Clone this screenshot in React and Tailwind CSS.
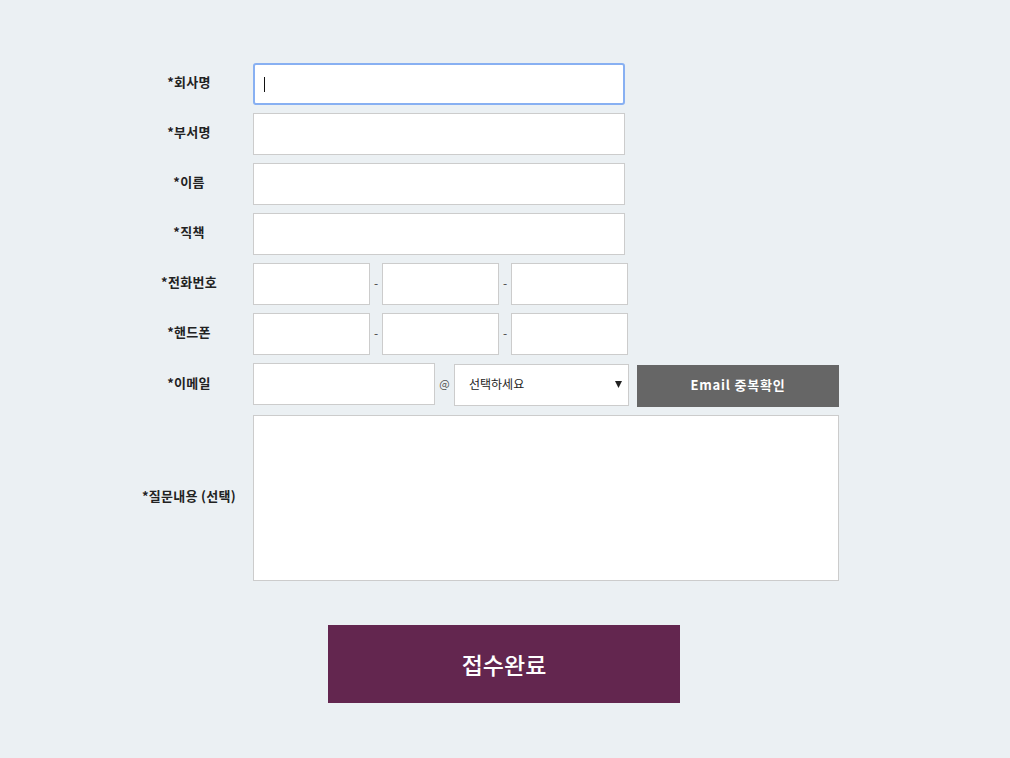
export default function App() {
  const label =
    "w-[128px] shrink-0 pb-[5px] text-center text-[13px] font-bold text-[#222] leading-none tracking-[0.3px]";
  const box = "h-[42px] bg-white border border-[#cccccc] outline-none";
  const Dash = () => (
    <span className="w-[12px] pb-[3px] text-center text-[12px] text-[#444] leading-none">-</span>
  );
  return (
    <div className="min-h-screen bg-[#ebf0f3] pt-[63px] font-['Noto_Sans_CJK_KR','Noto_Sans',sans-serif]">
      <div className="ml-[125px] w-[714px] flex flex-col gap-2">
        <div className="flex items-center">
          <div className={label}>*회사명</div>
          <div className="relative w-[372px] h-[42px] bg-white border-2 border-[#88b0f2] rounded-[3px]">
            <span className="absolute left-[9px] top-[12px] w-px h-[15px] bg-[#111]" />
          </div>
        </div>
        <div className="flex items-center">
          <div className={label}>*부서명</div>
          <input className={`${box} w-[372px]`} />
        </div>
        <div className="flex items-center">
          <div className={label}>*이름</div>
          <input className={`${box} w-[372px]`} />
        </div>
        <div className="flex items-center">
          <div className={label}>*직책</div>
          <input className={`${box} w-[372px]`} />
        </div>
        <div className="flex items-center">
          <div className={label}>*전화번호</div>
          <input className={`${box} w-[117px]`} />
          <Dash />
          <input className={`${box} w-[117px]`} />
          <Dash />
          <input className={`${box} w-[117px]`} />
        </div>
        <div className="flex items-center">
          <div className={label}>*핸드폰</div>
          <input className={`${box} w-[117px]`} />
          <Dash />
          <input className={`${box} w-[117px]`} />
          <Dash />
          <input className={`${box} w-[117px]`} />
        </div>
        <div className="flex items-start h-[44px]">
          <div className={`${label} self-center`}>*이메일</div>
          <input className={`${box} w-[182px]`} />
          <span className="w-[19px] h-[42px] pb-[2px] flex items-center justify-center text-[11px] text-[#555]">
            @
          </span>
          <div className="mt-px w-[175px] h-[42px] bg-white border border-[#cccccc] flex items-center justify-between pl-[14px] pr-[6px]">
            <span className="text-[12px] text-[#222] pb-[2px]">선택하세요</span>
            <svg width="7" height="7" viewBox="0 0 7 7" className="mb-px">
              <path d="M0 0H7L3.5 7Z" fill="#222" />
            </svg>
          </div>
          <button className="ml-2 mt-[2px] w-[202px] h-[42px] pb-[2px] bg-[#666666] text-white text-[13px] font-bold tracking-[0.8px]">
            Email 중복확인
          </button>
        </div>
        <div className="flex items-center">
          <div className={label}>*질문내용 (선택)</div>
          <textarea className="w-[586px] h-[166px] bg-white border border-[#cccccc] outline-none resize-none" />
        </div>
      </div>
      <button className="block ml-[328px] mt-[44px] w-[352px] h-[78px] bg-[#63264f] text-white text-[23px] font-medium">
        접수완료
      </button>
    </div>
  );
}
